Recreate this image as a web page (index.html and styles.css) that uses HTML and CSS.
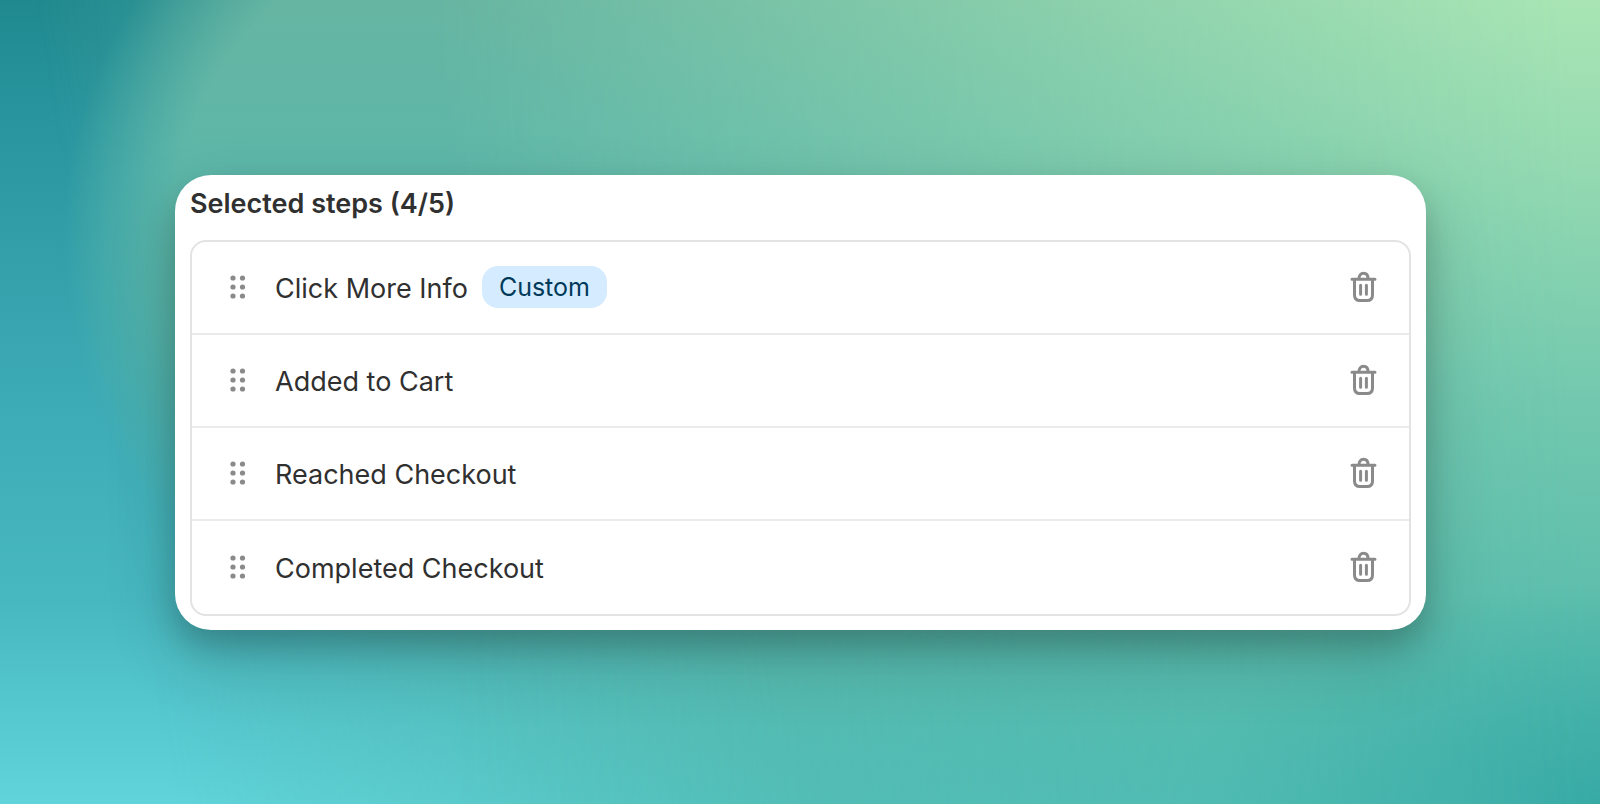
FILE: index.html
```html
<!DOCTYPE html>
<html lang="en">
<head>
<meta charset="utf-8">
<meta name="viewport" content="width=device-width, initial-scale=1">
<title>Selected steps</title>
<link rel="stylesheet" href="styles.css">
</head>
<body>
<svg class="sprite" aria-hidden="true">
  <symbol id="grip" viewBox="0 0 16 24">
    <circle cx="3" cy="3" r="2.6"/><circle cx="12.5" cy="3" r="2.6"/>
    <circle cx="3" cy="12" r="2.6"/><circle cx="12.5" cy="12" r="2.6"/>
    <circle cx="3" cy="21" r="2.6"/><circle cx="12.5" cy="21" r="2.6"/>
  </symbol>
  <symbol id="trash" viewBox="0 0 28 32">
    <path d="M2 8.3H25M8.9 8C8.9 4.5 10.7 2.3 13.5 2.3S18.1 4.5 18.1 8M4.5 9V24Q4.5 29.6 10 29.6H17Q22.5 29.6 22.5 24V9M10.6 14.3V23.2M16.4 14.3V23.2"/>
  </symbol>
</svg>
<main class="stage">
  <section class="card" aria-labelledby="steps-title">
    <h1 class="title" id="steps-title">Selected steps (4/5)</h1>
    <ul class="steps">
      <li class="step">
        <button class="icon-button grip" type="button" aria-label="Reorder Click More Info"><svg class="grip-icon"><use href="#grip"/></svg></button>
        <span class="name">Click More Info</span>
        <span class="badge">Custom</span>
        <button class="icon-button remove" type="button" aria-label="Remove Click More Info"><svg class="trash-icon"><use href="#trash"/></svg></button>
      </li>
      <li class="step">
        <button class="icon-button grip" type="button" aria-label="Reorder Added to Cart"><svg class="grip-icon"><use href="#grip"/></svg></button>
        <span class="name">Added to Cart</span>
        <button class="icon-button remove" type="button" aria-label="Remove Added to Cart"><svg class="trash-icon"><use href="#trash"/></svg></button>
      </li>
      <li class="step">
        <button class="icon-button grip" type="button" aria-label="Reorder Reached Checkout"><svg class="grip-icon"><use href="#grip"/></svg></button>
        <span class="name">Reached Checkout</span>
        <button class="icon-button remove" type="button" aria-label="Remove Reached Checkout"><svg class="trash-icon"><use href="#trash"/></svg></button>
      </li>
      <li class="step">
        <button class="icon-button grip" type="button" aria-label="Reorder Completed Checkout"><svg class="grip-icon"><use href="#grip"/></svg></button>
        <span class="name">Completed Checkout</span>
        <button class="icon-button remove" type="button" aria-label="Remove Completed Checkout"><svg class="trash-icon"><use href="#trash"/></svg></button>
      </li>
    </ul>
  </section>
</main>
</body>
</html>
```
FILE: styles.css
```css
* { box-sizing: border-box; }

body {
  margin: 0;
  font-family: Inter, "Liberation Sans", sans-serif;
  color: #303030;
}

.sprite { display: none; }

/* Backdrop: three vertical colour ramps blended from left to right */
.stage {
  position: relative;
  isolation: isolate;
  display: flex;
  flex-direction: column;
  justify-content: center;
  min-height: 100vh;
  padding: 24px 174px 24px 175px;
  background: linear-gradient(#1f898f 0%, #29959e 15%, #3caab5 48%, #48b8c0 75%, #60d4da 100%);
}

.stage::before,
.stage::after {
  content: "";
  position: absolute;
  inset: 0;
  z-index: -1;
}

.stage::before {
  background: linear-gradient(#66b5a2 0%, #5db7a9 22%, #57b3a6 50%, #54b7ae 80%, #54bfba 100%);
  mask-image:
    radial-gradient(ellipse 420px 420px at 490px 240px, #000 76%, transparent 102%),
    linear-gradient(80deg, transparent 10%, #000 46%);
}

.stage::after {
  background:
    radial-gradient(ellipse 420px 220px at 100% 100%, #38aaa5, transparent),
    linear-gradient(#a9e5b4 0%, #95dab1 20%, #72c8ae 50%, #5bbdac 78%, #4ebaae 100%);
  mask-image: linear-gradient(88deg, transparent 28%, #000 98%);
}

.card {
  padding: 12px 15px 14px;
  border-radius: 36px;
  background: #fff;
  box-shadow: 0 16px 30px rgb(0 0 0 / 18%), 0 28px 70px rgb(0 0 0 / 16%);
}

.title {
  margin: 0 0 20px;
  font-size: 27px;
  line-height: 33px;
  font-weight: 600;
}

.steps {
  display: grid;
  grid-auto-rows: 1fr;
  min-height: 376px;
  margin: 0;
  padding: 0;
  list-style: none;
  border: 2px solid #e3e3e3;
  border-radius: 16px;
}

.step {
  display: flex;
  align-items: center;
  padding: 0 31px 0 38px;
}

.step:not(:last-child) { border-bottom: 2px solid #ebebeb; }

.icon-button {
  display: flex;
  padding: 0;
  border: 0;
  background: none;
  color: #8a8a8a;
}

.grip { margin-right: 29px; cursor: grab; }
.remove { margin-left: auto; cursor: pointer; }

.grip-icon { width: 16px; height: 24px; fill: currentColor; }

.trash-icon {
  width: 28px;
  height: 32px;
  fill: none;
  stroke: currentColor;
  stroke-width: 3;
  stroke-linecap: round;
}

.name { padding-top: 4px; font-size: 27px; line-height: 40px; }

.badge {
  margin-left: 14px;
  padding: 0 17px;
  border-radius: 16px;
  background: #d5ebff;
  color: #003a5a;
  font-size: 25px;
  line-height: 42px;
}
```
